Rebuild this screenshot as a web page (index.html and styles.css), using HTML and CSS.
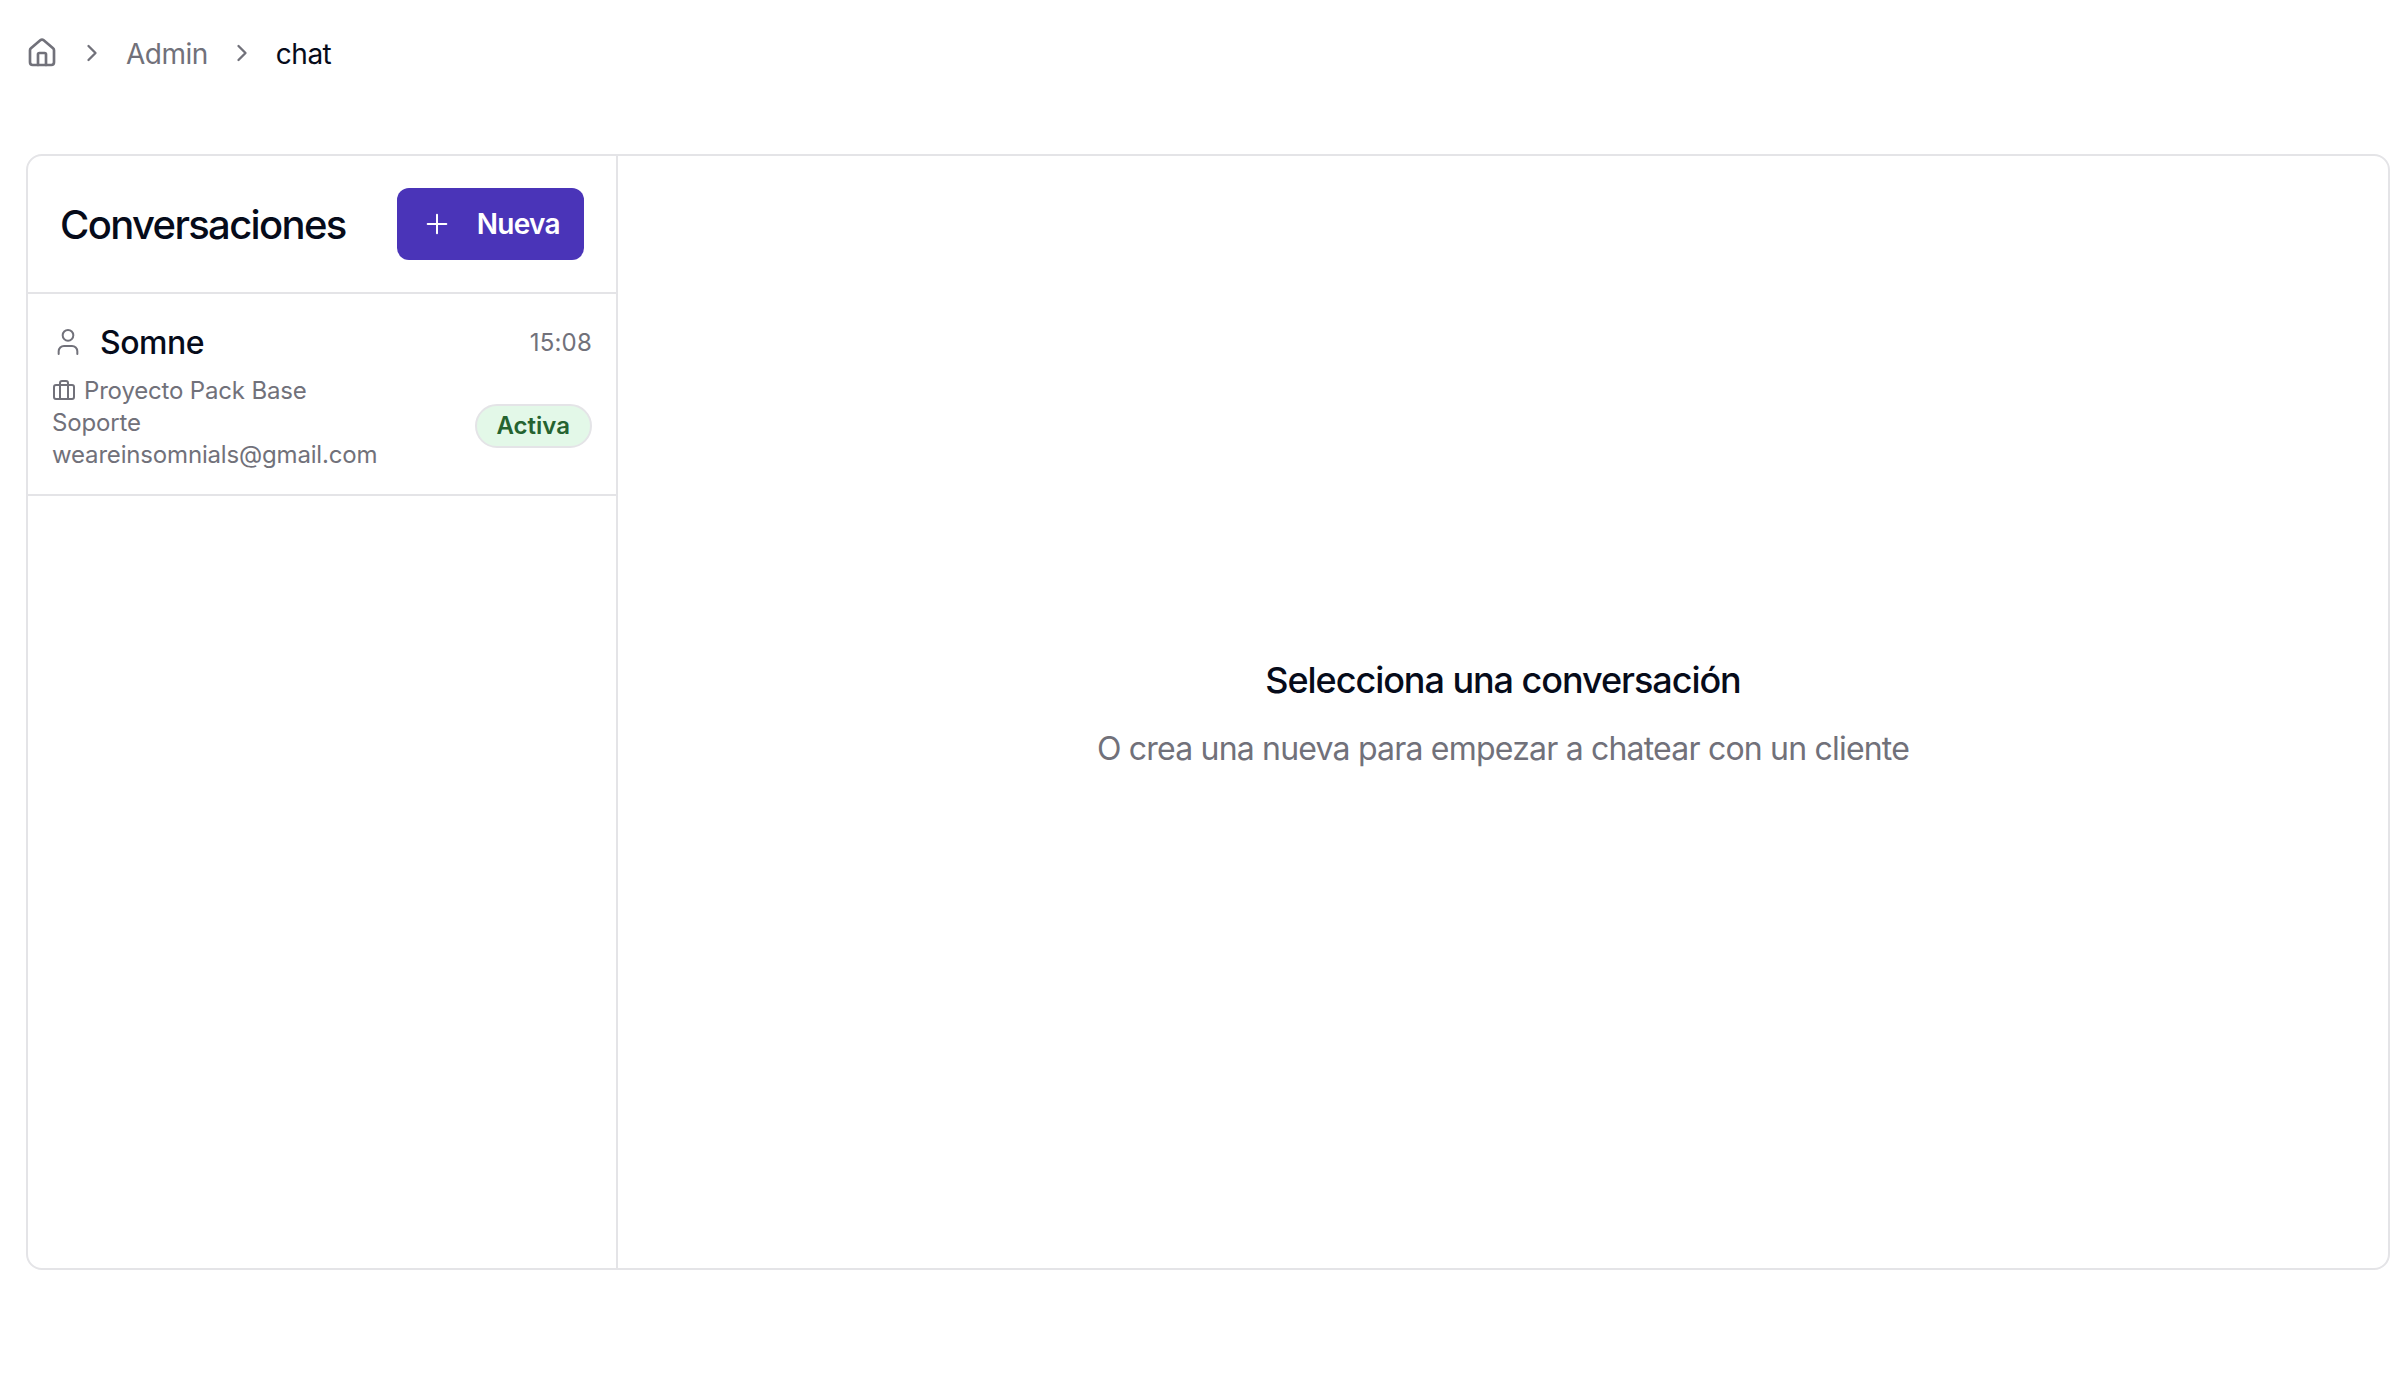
FILE: index.html
```html
<!DOCTYPE html>
<html lang="es">
<head>
<meta charset="utf-8">
<title>chat</title>
<link rel="stylesheet" href="styles.css">
</head>
<body>
<nav class="crumbs">
  <svg class="home" viewBox="0 0 24 24" fill="none" stroke="currentColor" stroke-width="2" stroke-linecap="round" stroke-linejoin="round"><path d="M15 21v-8a1 1 0 0 0-1-1h-4a1 1 0 0 0-1 1v8"/><path d="M3 10a2 2 0 0 1 .709-1.528l7-5.999a2 2 0 0 1 2.582 0l7 5.999A2 2 0 0 1 21 10v9a2 2 0 0 1-2 2H5a2 2 0 0 1-2-2z"/></svg>
  <svg class="chev" viewBox="0 0 24 24" fill="none" stroke="currentColor" stroke-width="2" stroke-linecap="round" stroke-linejoin="round"><path d="m9 18 6-6-6-6"/></svg>
  <span class="crumb">Admin</span>
  <svg class="chev" viewBox="0 0 24 24" fill="none" stroke="currentColor" stroke-width="2" stroke-linecap="round" stroke-linejoin="round"><path d="m9 18 6-6-6-6"/></svg>
  <span class="crumb current">chat</span>
</nav>
<main class="card">
  <aside class="side">
    <header class="side-head">
      <h1 class="title">Conversaciones</h1>
      <button class="new" type="button">
        <svg class="plus" viewBox="0 0 24 24" fill="none" stroke="currentColor" stroke-width="1.5" stroke-linecap="round" stroke-linejoin="round"><path d="M5 12h14"/><path d="M12 5v14"/></svg>
        <span>Nueva</span>
      </button>
    </header>
    <article class="conv">
      <div class="conv-top">
        <div class="who">
          <svg class="user" viewBox="0 0 24 24" fill="none" stroke="currentColor" stroke-width="1.5" stroke-linecap="round" stroke-linejoin="round"><path d="M19 21v-2a4 4 0 0 0-4-4H9a4 4 0 0 0-4 4v2"/><circle cx="12" cy="7" r="4"/></svg>
          <span class="name">Somne</span>
        </div>
        <time class="time">15:08</time>
      </div>
      <div class="conv-bottom">
        <div class="meta">
          <div class="project">
            <svg class="case" viewBox="0 0 24 24" fill="none" stroke="currentColor" stroke-width="2" stroke-linecap="round" stroke-linejoin="round"><path d="M16 20V4a2 2 0 0 0-2-2h-4a2 2 0 0 0-2 2v16"/><rect width="20" height="14" x="2" y="6" rx="2"/></svg>
            <span>Proyecto Pack Base</span>
          </div>
          <div>Soporte</div>
          <div>weareinsomnials@gmail.com</div>
        </div>
        <span class="badge">Activa</span>
      </div>
    </article>
  </aside>
  <section class="empty">
    <h2 class="empty-title">Selecciona una conversación</h2>
    <p class="empty-sub">O crea una nueva para empezar a chatear con un cliente</p>
  </section>
</main>
</body>
</html>
```
FILE: styles.css
```css
* { box-sizing: border-box; }
html, body { margin: 0; padding: 0; background: #fff; }
body {
  font-family: Inter, "Liberation Sans", sans-serif;
  color: #060b1a;
  height: 1392px;
  padding: 0 10px 0 26px;
  overflow: hidden;
}
.crumbs {
  display: flex;
  align-items: center;
  gap: 20px;
  height: 106px;
  color: #71717a;
  font-size: 28px;
}
.home { width: 32px; height: 32px; }
.chev { width: 28px; height: 28px; }
.crumb { line-height: 40px; padding-top: 2px; letter-spacing: -0.5px; }
.current { color: #060b1a; }
.card {
  margin-top: 48px;
  height: 1116px;
  border: 2px solid #e4e4e7;
  border-radius: 16px;
  display: flex;
  overflow: hidden;
}
.side {
  width: 590px;
  border-right: 2px solid #e4e4e7;
  flex: none;
}
.side-head {
  height: 138px;
  border-bottom: 2px solid #e4e4e7;
  display: flex;
  align-items: center;
  justify-content: space-between;
  padding: 0 32px;
}
.title { margin: 0; font-size: 40px; font-weight: 500; letter-spacing: -1.65px; }
.new {
  display: flex;
  align-items: center;
  gap: 24px;
  height: 72px;
  padding: 0 24px;
  border: 0;
  border-radius: 12px;
  background: #4a34b8;
  color: #fff;
  font: 600 28px Inter, sans-serif;
  letter-spacing: -0.7px;
}
.plus { width: 32px; height: 32px; }
.conv {
  height: 202px;
  border-bottom: 2px solid #e4e4e7;
  padding: 28px 24px 0;
}
.conv-top { display: flex; align-items: center; justify-content: space-between; height: 40px; }
.who { display: flex; align-items: center; gap: 16px; }
.user { width: 32px; height: 32px; color: #71717a; }
.name { font-size: 32px; font-weight: 500; letter-spacing: -0.5px; }
.time { font-size: 24px; color: #71717a; letter-spacing: 0.2px; }
.conv-bottom { display: flex; align-items: center; justify-content: space-between; margin-top: 13px; }
.meta { font-size: 24px; line-height: 32px; color: #71717a; letter-spacing: -0.17px; }
.project { display: flex; align-items: center; gap: 8px; }
.case { width: 24px; height: 24px; }
.badge {
  font-size: 24px;
  font-weight: 600;
  line-height: 40px;
  margin-top: 5px;
  padding: 0 20px;
  color: #256330;
  background: #e3f8e8;
  border: 2px solid #e4e4e7;
  border-radius: 999px;
}
.empty {
  flex: 1;
  display: flex;
  flex-direction: column;
  align-items: center;
  padding-top: 504px;
}
.empty-title { margin: 0; font-size: 36px; font-weight: 500; line-height: 40px; letter-spacing: -1.05px; }
.empty-sub { margin: 29px 0 0; font-size: 32px; line-height: 40px; color: #71717a; letter-spacing: -0.8px; }
```
